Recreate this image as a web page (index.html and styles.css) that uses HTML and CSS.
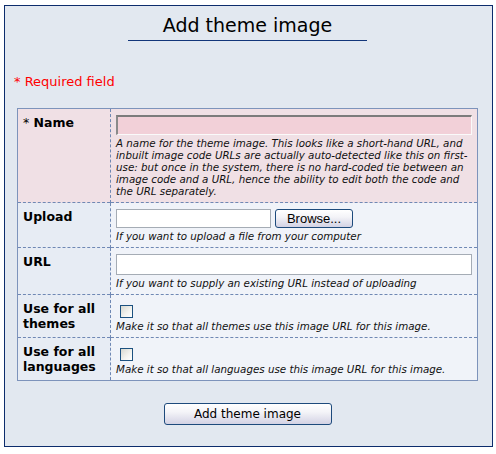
FILE: index.html
```html
<!DOCTYPE html>
<html lang="en">
<head>
    <meta charset="UTF-8">
    <title>Add theme image</title>
    <link rel="stylesheet" href="styles.css">
</head>
<body>
    <div class="box">
        <h1 class="title">Add theme image</h1>

        <p class="required">* Required field</p>

        <form>
            <table class="form-table">
                <tr class="row-required">
                    <th><span class="star">*</span> Name</th>
                    <td>
                        <input type="text" class="input input-required">
                        <div class="desc">A name for the theme image. This looks like a short-hand URL, and inbuilt image code URLs are actually auto-detected like this on first-use: but once in the system, there is no hard-coded tie between an image code and a URL, hence the ability to edit both the code and the URL separately.</div>
                    </td>
                </tr>
                <tr>
                    <th>Upload</th>
                    <td>
                        <div class="file-row">
                            <span class="input input-file"></span>
                            <button type="button" class="btn btn-browse">Browse...</button>
                        </div>
                        <div class="desc">If you want to upload a file from your computer</div>
                    </td>
                </tr>
                <tr>
                    <th>URL</th>
                    <td>
                        <input type="text" class="input input-url">
                        <div class="desc">If you want to supply an existing URL instead of uploading</div>
                    </td>
                </tr>
                <tr>
                    <th>Use for all themes</th>
                    <td>
                        <input type="checkbox" class="check">
                        <div class="desc">Make it so that all themes use this image URL for this image.</div>
                    </td>
                </tr>
                <tr>
                    <th>Use for all languages</th>
                    <td>
                        <input type="checkbox" class="check">
                        <div class="desc">Make it so that all languages use this image URL for this image.</div>
                    </td>
                </tr>
            </table>

            <div class="actions">
                <button type="button" class="btn btn-submit">Add theme image</button>
            </div>
        </form>
    </div>
</body>
</html>
```

FILE: styles.css
```css
body {
    margin: 5px 3px 6px 4px;
    font-family: "DejaVu Sans", Verdana, sans-serif;
    color: #000;
    background-color: #fff;
}

.box {
    height: 440px;
    padding: 0 14px 0 12px;
    background-color: #e2e8f0;
    border: 1px solid #0c2c6c;
}

.title {
    width: 239px;
    margin: 8px auto 0;
    padding-bottom: 4px;
    font-size: 19px;
    font-weight: normal;
    line-height: 22px;
    text-align: center;
    border-bottom: 1px solid #12367a;
}

.required {
    margin: 33px 0 0 -3px;
    font-size: 13px;
    line-height: 15px;
    color: #f00;
}

.form-table {
    width: 100%;
    margin-top: 19px;
    border-collapse: collapse;
    border: 1px solid #7d93bb;
}

.form-table th,
.form-table td {
    padding: 6px 5px 5px;
    vertical-align: top;
    border-top: 1px dashed #6f88b4;
    background-color: #f0f3f9;
}

.form-table th {
    width: 82px;
    text-align: left;
    font-size: 12.5px;
    line-height: 15px;
    font-weight: bold;
    background-color: #e7ecf4;
    border-right: 1px dashed #6f88b4;
}

.form-table .row-required th,
.form-table .row-required td {
    background-color: #f0e0e5;
}

.star {
    font-weight: normal;
}

.input {
    display: block;
    box-sizing: border-box;
    margin: 0;
    padding: 0;
    background-color: #fff;
    border: 1px solid #a5acb5;
}

.input-required {
    width: 356px;
    height: 20px;
    background-color: #f2d0d8;
    border-top: 2px solid #7c7c7c;
    border-left: 2px solid #8a8a8a;
    border-right: 1px solid #fafafa;
    border-bottom: 1px solid #fafafa;
}

.input-url {
    width: 356px;
    height: 21px;
}

.file-row {
    display: flex;
    align-items: flex-start;
    gap: 4px;
    height: 19px;
}

.input-file {
    width: 155px;
    height: 19px;
}

.desc {
    margin-top: 2px;
    font-size: 10.3px;
    line-height: 12px;
    font-style: italic;
    color: #111;
}

.btn {
    padding: 0;
    color: #000;
    border: 1px solid #1d4a7c;
    border-radius: 3px;
    background: linear-gradient(#ffffff 0%, #f4f4f8 40%, #d3d2e4 100%);
}

.btn-browse {
    box-sizing: border-box;
    width: 78px;
    height: 19px;
    font-family: "Liberation Sans", Arial, sans-serif;
    font-size: 13px;
    line-height: 16px;
}

.check {
    display: block;
    appearance: none;
    width: 13px;
    height: 13px;
    margin: 4px 0 0 4px;
    border: 1px solid #1c5180;
    background: linear-gradient(135deg, #d8d8d0 0%, #f4f4f0 60%, #ffffff 100%);
}

.actions {
    margin-top: 22px;
    text-align: center;
}

.btn-submit {
    width: 168px;
    height: 22px;
    font-family: "DejaVu Sans", Verdana, sans-serif;
    font-size: 12px;
}
```
